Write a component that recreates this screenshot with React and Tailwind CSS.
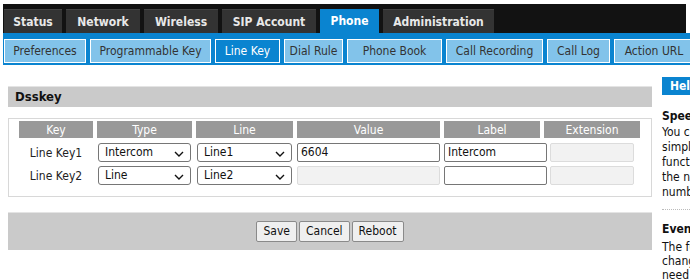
const font = { fontFamily: '"DejaVu Sans Condensed", "Liberation Sans", sans-serif' };

const mainTabs = [
  { name: "Status", w: "w-[58px]" },
  { name: "Network", w: "w-[74px]" },
  { name: "Wireless", w: "w-[74px]" },
  { name: "SIP Account", w: "w-[94px]" },
  { name: "Phone", w: "w-[59px]", active: true },
  { name: "Administration", w: "w-[111px]" },
];

const subTabs = [
  { name: "Preferences", w: "w-[82px]" },
  { name: "Programmable Key", w: "w-[121px]" },
  { name: "Line Key", w: "w-[65px]", active: true },
  { name: "Dial Rule", w: "w-[59px]" },
  { name: "Phone Book", w: "w-[95px]" },
  { name: "Call Recording", w: "w-[97px]" },
  { name: "Call Log", w: "w-[63px]" },
  { name: "Action URL", w: "w-[80px]" },
];

function Chevron() {
  return (
    <svg width="10" height="6" viewBox="0 0 10 6" className="absolute right-[6px] top-[7px]">
      <path d="M1 1l4 4 4-4" fill="none" stroke="#111" strokeWidth="1.4" />
    </svg>
  );
}

function Select({ value, w }) {
  return (
    <div className={`relative ${w} h-[19px] border border-[#767676] rounded-[3px] bg-white text-[12px] text-[#111] pl-[6px] leading-[17px]`}>
      {value}
      <Chevron />
    </div>
  );
}

function Input({ value, w, disabled }) {
  return (
    <div
      className={`${w} h-[19px] rounded-[2px] text-[12px] text-[#111] pl-[3px] leading-[17px] border ${
        disabled ? "border-[#dcdcdc] bg-[#f2f2f2]" : "border-[#767676] bg-white"
      }`}
    >
      {value}
    </div>
  );
}

const headers = [
  { name: "Key", w: "w-[74px]" },
  { name: "Type", w: "w-[95px]" },
  { name: "Line", w: "w-[97px]" },
  { name: "Value", w: "w-[143px]" },
  { name: "Label", w: "w-[96px]" },
  { name: "Extension", w: "w-[96px]" },
];

const rows = [
  { key: "Line Key1", type: "Intercom", line: "Line1", value: "6604", label: "Intercom" },
  { key: "Line Key2", type: "Line", line: "Line2", value: null, label: "" },
];

export default function App() {
  return (
    <div className="w-[690px] h-[280px] overflow-hidden bg-white" style={font}>
      {/* Top navigation */}
      <div className="pt-[4px] pl-[3px]">
        <div className="h-[29px] w-[683px] bg-[#121212] flex items-end gap-[4px] pl-[1px]">
          {mainTabs.map((t) => (
            <div
              key={t.name}
              className={`${t.w} shrink-0 h-[24px] flex items-center justify-center text-[12px] font-bold ${
                t.active ? "bg-[#0a84d0] text-white" : "bg-[#333] text-[#e8e8e8] border-t border-[#444]"
              }`}
            >
              {t.name}
            </div>
          ))}
        </div>
        <div className="h-[32px] bg-[#0a84d0] flex items-start pt-[6px] gap-[4px] pl-[1px]">
          {subTabs.map((t) => (
            <div
              key={t.name}
              className={`${t.w} shrink-0 h-[24px] flex items-center justify-center text-[12px] whitespace-nowrap border border-white ${
                t.active ? "bg-[#0a84d0] text-white" : "bg-[#82c3ea] text-[#333]"
              }`}
            >
              {t.name}
            </div>
          ))}
        </div>
      </div>

      <div className="flex">
        {/* Main content */}
        <div className="w-[644px] shrink-0 ml-[8px] pt-[21px]">
          <div className="h-[21px] bg-[#cacaca] border-t border-[#e4e4e4] pl-[7px] text-[13px] font-bold text-[#111] leading-[20px]">
            Dsskey
          </div>

          <div className="mt-[11px] h-[79px] border border-[#d8d8d8] pl-[10px] pt-[2px]">
            <div className="flex gap-[4px]">
              {headers.map((h) => (
                <div
                  key={h.name}
                  className={`${h.w} h-[17px] bg-[#999] text-white text-[12px] flex items-center justify-center`}
                >
                  {h.name}
                </div>
              ))}
            </div>
            {rows.map((r, i) => (
              <div key={r.key} className={`flex items-center ${i === 0 ? "mt-[5px]" : "mt-[4px]"}`}>
                <div className="w-[74px] text-center text-[12px] text-[#222]">{r.key}</div>
                <div className="ml-[5px]">
                  <Select value={r.type} w="w-[93px]" />
                </div>
                <div className="ml-[6px]">
                  <Select value={r.line} w="w-[95px]" />
                </div>
                <div className="ml-[5px]">
                  <Input value={r.value} w="w-[143px]" disabled={r.value === null} />
                </div>
                <div className="ml-[4px]">
                  <Input value={r.label} w="w-[103px]" />
                </div>
                <div className="ml-[3px]">
                  <Input value="" w="w-[84px]" disabled />
                </div>
              </div>
            ))}
          </div>

          <div className="mt-[15px] h-[38px] bg-[#cacaca] border-t border-[#e4e4e4] flex items-center justify-center gap-[2px]">
            {["Save", "Cancel", "Reboot"].map((b) => (
              <button
                key={b}
                className="h-[21px] px-[6px] bg-[#efefef] border border-[#8a8a8a] rounded-[2px] text-[12px] text-[#111] leading-[19px]"
              >
                {b}
              </button>
            ))}
          </div>
        </div>

        {/* Help panel */}
        <div className="ml-[10px] pt-[12px] w-[120px] shrink-0 text-[12px] text-[#111] whitespace-nowrap">
          <div className="w-[40px] h-[18px] bg-[#0a84d0] text-white font-bold text-[12px] pl-[8px] leading-[18px]">
            Help
          </div>
          <div className="mt-[12px] font-bold text-[12px]">Speed Dial</div>
          <div className="leading-[15px]">
            You can
            <br />
            simply
            <br />
            function
            <br />
            the number
            <br />
            number
          </div>
          <div className="mt-[9px] w-[40px] border-t border-dotted border-[#bbb]" />
          <div className="mt-[10px] font-bold text-[12px]">Event</div>
          <div className="mt-[2px] leading-[14px]">
            The function
            <br />
            change
            <br />
            need
          </div>
        </div>
      </div>
    </div>
  );
}
